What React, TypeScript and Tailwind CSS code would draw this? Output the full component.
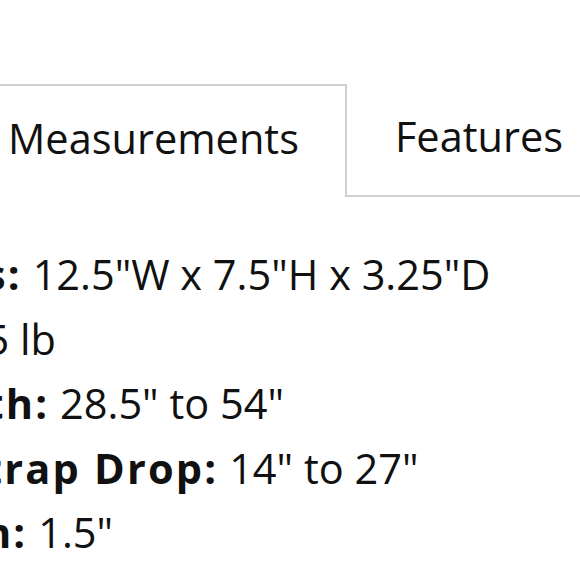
import React from 'react';

const specs = [
  { label: 'Dimensions:', value: '12.5"W x 7.5"H x 3.25"D' },
  { label: 'Weight:', value: '1.25 lb' },
  { label: 'Strap Length:', value: '28.5" to 54"' },
  { label: 'Shoulder Strap Drop:', value: '14" to 27"' },
  { label: 'Strap Width:', value: '1.5"' },
];

export default function App() {
  return (
    <div className="w-[580px] h-[580px] overflow-hidden bg-white text-[#111] font-['Open_Sans',sans-serif]">
      <div className="-ml-[38px] pt-[84px]">
        {/* Tabs */}
        <div className="flex text-[41.5px] leading-none">
          <div className="h-[113px] border-2 border-b-0 border-[#d0d0d0] pl-[44px] pr-[46px] pb-[6px] flex items-center">
            Measurements
          </div>
          <div className="flex-1 h-[113px] border-b-2 border-[#d0d0d0] pl-[48px] pr-[48px] pb-[6px] flex items-center">
            Features
          </div>
        </div>

        {/* Spec list */}
        <div className="mt-[45px] -ml-[219px] text-[41.5px] leading-[64.5px]">
          {specs.map((s) => (
            <p key={s.label} className="whitespace-nowrap">
              <strong className="font-bold tracking-[2.2px]">{s.label}</strong> {s.value}
            </p>
          ))}
        </div>
      </div>
    </div>
  );
}
